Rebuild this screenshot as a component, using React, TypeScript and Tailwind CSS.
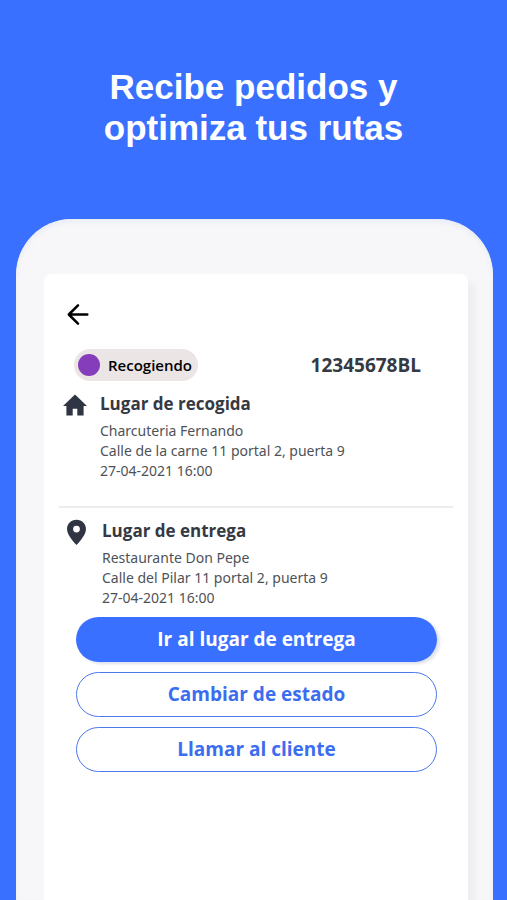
import type { ReactNode } from "react"

type StopProps = {
    icon: ReactNode
    title: string
    lines: string[]
    className: string
}

const pickup = ["Charcuteria Fernando", "Calle de la carne 11 portal 2, puerta 9", "27-04-2021 16:00"]
const delivery = ["Restaurante Don Pepe", "Calle del Pilar 11 portal 2, puerta 9", "27-04-2021 16:00"]

function BackIcon() {
    return (
        <svg className="block h-6 w-6" viewBox="0 0 24 24" fill="none" stroke="#000" strokeWidth="2.5" strokeLinecap="round" strokeLinejoin="round">
            <path d="M21.300 12.500H3M12 3.300L2.800 12.500l9.200 9.200" />
        </svg>
    )
}

function HomeIcon() {
    return (
        <svg className="mt-[2px] block h-6 w-6" viewBox="0 0 24 24" fill="#2f3542">
            <path d="M12 .6L-.1 12h3.500v9.500h6.300v-6.700h4.600v6.700h6.300V12h3.500z" />
        </svg>
    )
}

function PinIcon() {
    return (
        <svg className="block h-7 w-6" viewBox="0 0 24 28" fill="#2f3542">
            <path fillRule="evenodd" d="M11.500.8C6.100.8 2 4.900 2 10.100 2 17 11.500 26 11.500 26s9.500-9 9.500-15.900C21 4.900 16.900.8 11.500.8zm0 12.700a3.400 3.400 0 1 1 0-6.800 3.400 3.400 0 0 1 0 6.800z" />
        </svg>
    )
}

function Stop({ icon, title, lines, className }: StopProps) {
    return (
        <section className={`flex items-start ${className}`}>
            {icon}
            <div>
                <h2 className="text-[17px] leading-6 font-bold text-[#343943]">{title}</h2>
                <div className="mt-[5px] font-['Noto_Sans',sans-serif] text-[14px] leading-5 text-[#4e5258]">
                    {lines.map((line) => (
                        <p key={line}>{line}</p>
                    ))}
                </div>
            </div>
        </section>
    )
}

export default function App() {
    return (
        <div className="flex h-screen flex-col overflow-hidden bg-[#3a70ff] font-['Open_Sans',sans-serif]">
            <h1 className="pt-[66px] pb-[71px] text-center font-['Liberation_Sans',sans-serif] text-[35px] leading-[41px] font-bold text-white">
                Recibe pedidos y
                <br />
                optimiza tus rutas
            </h1>

            <div className="mr-[14px] ml-4 flex flex-1 flex-col rounded-t-[56px] bg-[#f7f7f9] pt-[55px] pr-[25px] pl-7 shadow-[inset_0_3px_5px_#e9ecf5]">
                <main className="flex-1 rounded-t-lg bg-white pt-7 pr-[15px] pl-[15px] shadow-[8px_8px_4px_#efeff1]">
                    <button type="button" aria-label="Volver" className="ml-[7px] block">
                        <BackIcon />
                    </button>

                    <div className="mt-[23px] mr-8 ml-[15px] flex items-center justify-between">
                        <span className="flex h-8 items-center gap-2 rounded-full bg-[#ebe5e5] pr-[6px] pl-1 text-[15px] font-semibold text-black">
                            <span className="h-[22px] w-[22px] rounded-full bg-[#853dbb]" />
                            Recogiendo
                        </span>
                        <span className="text-[19px] leading-6 font-bold text-[#343943]">12345678BL</span>
                    </div>

                    <Stop icon={<HomeIcon />} title="Lugar de recogida" lines={pickup} className="mt-[11px] ml-1 gap-[13px]" />
                    <hr className="mt-[25px] border-t-2 border-[#ececee]" />
                    <Stop icon={<PinIcon />} title="Lugar de entrega" lines={delivery} className="mt-[11px] ml-[6px] gap-[13px]" />

                    <div className="mt-[9px] mr-4 ml-[17px] flex flex-col gap-[10px] text-[19px] font-bold">
                        <button type="button" className="h-[45px] rounded-full bg-[#3a70ff] text-white shadow-[3px_2px_3px_#dfe2ec]">
                            Ir al lugar de entrega
                        </button>
                        <button type="button" className="h-[45px] rounded-full border border-[#4c78ec] text-[#3b6df0]">
                            Cambiar de estado
                        </button>
                        <button type="button" className="h-[45px] rounded-full border border-[#4c78ec] text-[#3b6df0]">
                            Llamar al cliente
                        </button>
                    </div>
                </main>
            </div>
        </div>
    )
}
